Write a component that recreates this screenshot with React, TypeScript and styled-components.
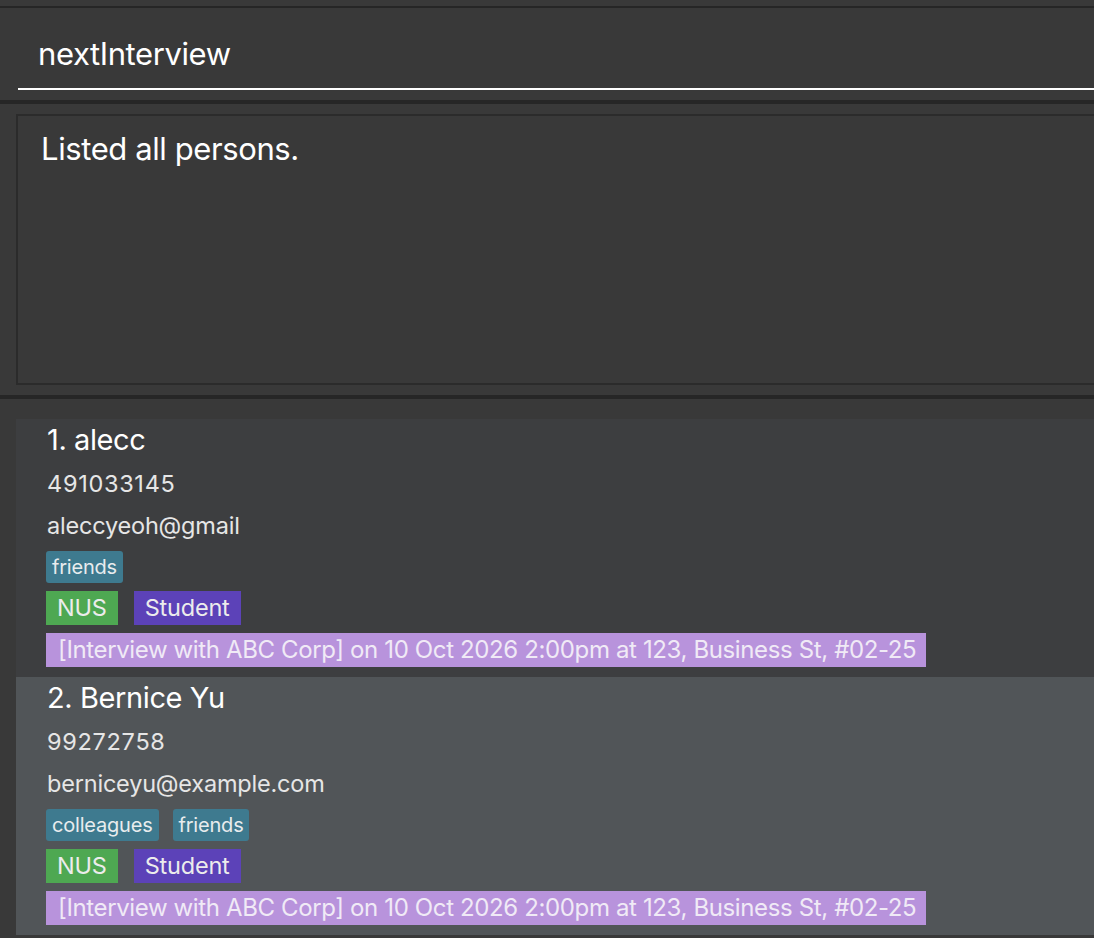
import React from "react";
import styled, { createGlobalStyle } from "styled-components";

const Global = createGlobalStyle`
  html, body { margin: 0; padding: 0; background: #393939; }
  body { font-family: Inter, "Noto Sans", sans-serif; overflow: hidden; }
`;

const Page = styled.div`
  width: 1094px;
  height: 938px;
  overflow: hidden;
  background: #393939;
  display: flex;
  flex-direction: column;
`;

const Divider = styled.div<{ $h: number; $top?: number }>`
  height: ${(p) => p.$h}px;
  margin-top: ${(p) => p.$top ?? 0}px;
  background: #262626;
  flex: none;
`;

const CommandArea = styled.div`
  height: 92px;
  padding: 0 0 0 18px;
  display: flex;
  flex-direction: column;
`;

const CommandInput = styled.div`
  height: 82px;
  box-sizing: border-box;
  border-bottom: 2px solid #ffffff;
  padding: 10px 0 0 20px;
  display: flex;
  align-items: center;
  color: #ffffff;
  font-size: 31px;
  letter-spacing: -0.4px;
  margin-right: -10px;
`;

const ResultWrap = styled.div`
  padding: 10px 0 10px 16px;
`;

const ResultBox = styled.div`
  height: 271px;
  box-sizing: border-box;
  border: 2px solid #2b2b2b;
  margin-right: -10px;
  padding: 14px 0 0 23px;
  color: #ffffff;
  font-size: 31px;
  letter-spacing: -0.4px;
  line-height: 38px;
`;

const List = styled.div`
  padding: 20px 0 0 16px;
  display: flex;
  flex-direction: column;
`;

const Card = styled.div<{ $alt: boolean }>`
  background: ${(p) => (p.$alt ? "#515558" : "#3d3e40")};
  padding: 0 0 10px 30px;
  margin-right: -10px;
  display: flex;
  flex-direction: column;
  align-items: flex-start;
`;

const Name = styled.div`
  height: 42px;
  line-height: 42px;
  font-size: 29px;
  color: #ffffff;
  padding-left: 1px;
  letter-spacing: -0.4px;
`;

const Field = styled.div<{ $top?: number; $wide?: boolean }>`
  height: 42px;
  line-height: 42px;
  font-size: 23.5px;
  color: #e6e6e6;
  padding-left: 1px;
  margin-top: ${(p) => p.$top ?? 0}px;
  letter-spacing: ${(p) => (p.$wide ? "0.7px" : "-0.2px")};
`;

const Row = styled.div<{ $top: number; $gap: number }>`
  display: flex;
  gap: ${(p) => p.$gap}px;
  margin-top: ${(p) => p.$top}px;
`;

const Tag = styled.span`
  height: 32px;
  line-height: 32px;
  padding: 0 6px;
  border-radius: 3px;
  background: #3e7a8f;
  color: #e8ecee;
  font-size: 20px;
  letter-spacing: -0.2px;
`;

const Badge = styled.span<{ $bg: string }>`
  height: 34px;
  line-height: 34px;
  padding: 0 11px;
  background: ${(p) => p.$bg};
  color: #ececec;
  font-size: 23.5px;
  letter-spacing: -0.2px;
`;

const Interview = styled.div`
  height: 34px;
  line-height: 34px;
  margin-top: 8px;
  padding: 0 10px 0 12px;
  background: #b893dc;
  color: #f0eaf6;
  font-size: 24px;
  letter-spacing: -0.37px;
  white-space: nowrap;
`;

type Person = {
  name: string;
  phone: string;
  email: string;
  tags: string[];
};

const people: Person[] = [
  { name: "1. alecc", phone: "491033145", email: "aleccyeoh@gmail", tags: ["friends"] },
  { name: "2. Bernice Yu", phone: "99272758", email: "berniceyu@example.com", tags: ["colleagues", "friends"] },
];

export default function App() {
  return (
    <Page>
      <Global />
      <Divider $h={2} $top={6} />
      <CommandArea>
        <CommandInput>nextInterview</CommandInput>
      </CommandArea>
      <Divider $h={4} />
      <ResultWrap>
        <ResultBox>Listed all persons.</ResultBox>
      </ResultWrap>
      <Divider $h={4} />
      <List>
        {people.map((p, i) => (
          <Card key={p.name} $alt={i % 2 === 1}>
            <Name>{p.name}</Name>
            <Field $top={2} $wide>{p.phone}</Field>
            <Field>{p.email}</Field>
            <Row $top={4} $gap={14}>
              {p.tags.map((t) => (
                <Tag key={t}>{t}</Tag>
              ))}
            </Row>
            <Row $top={8} $gap={16}>
              <Badge $bg="#4ea852">NUS</Badge>
              <Badge $bg="#5c42b8">Student</Badge>
            </Row>
            <Interview>[Interview with ABC Corp] on 10 Oct 2026 2:00pm at 123, Business St, #02-25</Interview>
          </Card>
        ))}
      </List>
    </Page>
  );
}
